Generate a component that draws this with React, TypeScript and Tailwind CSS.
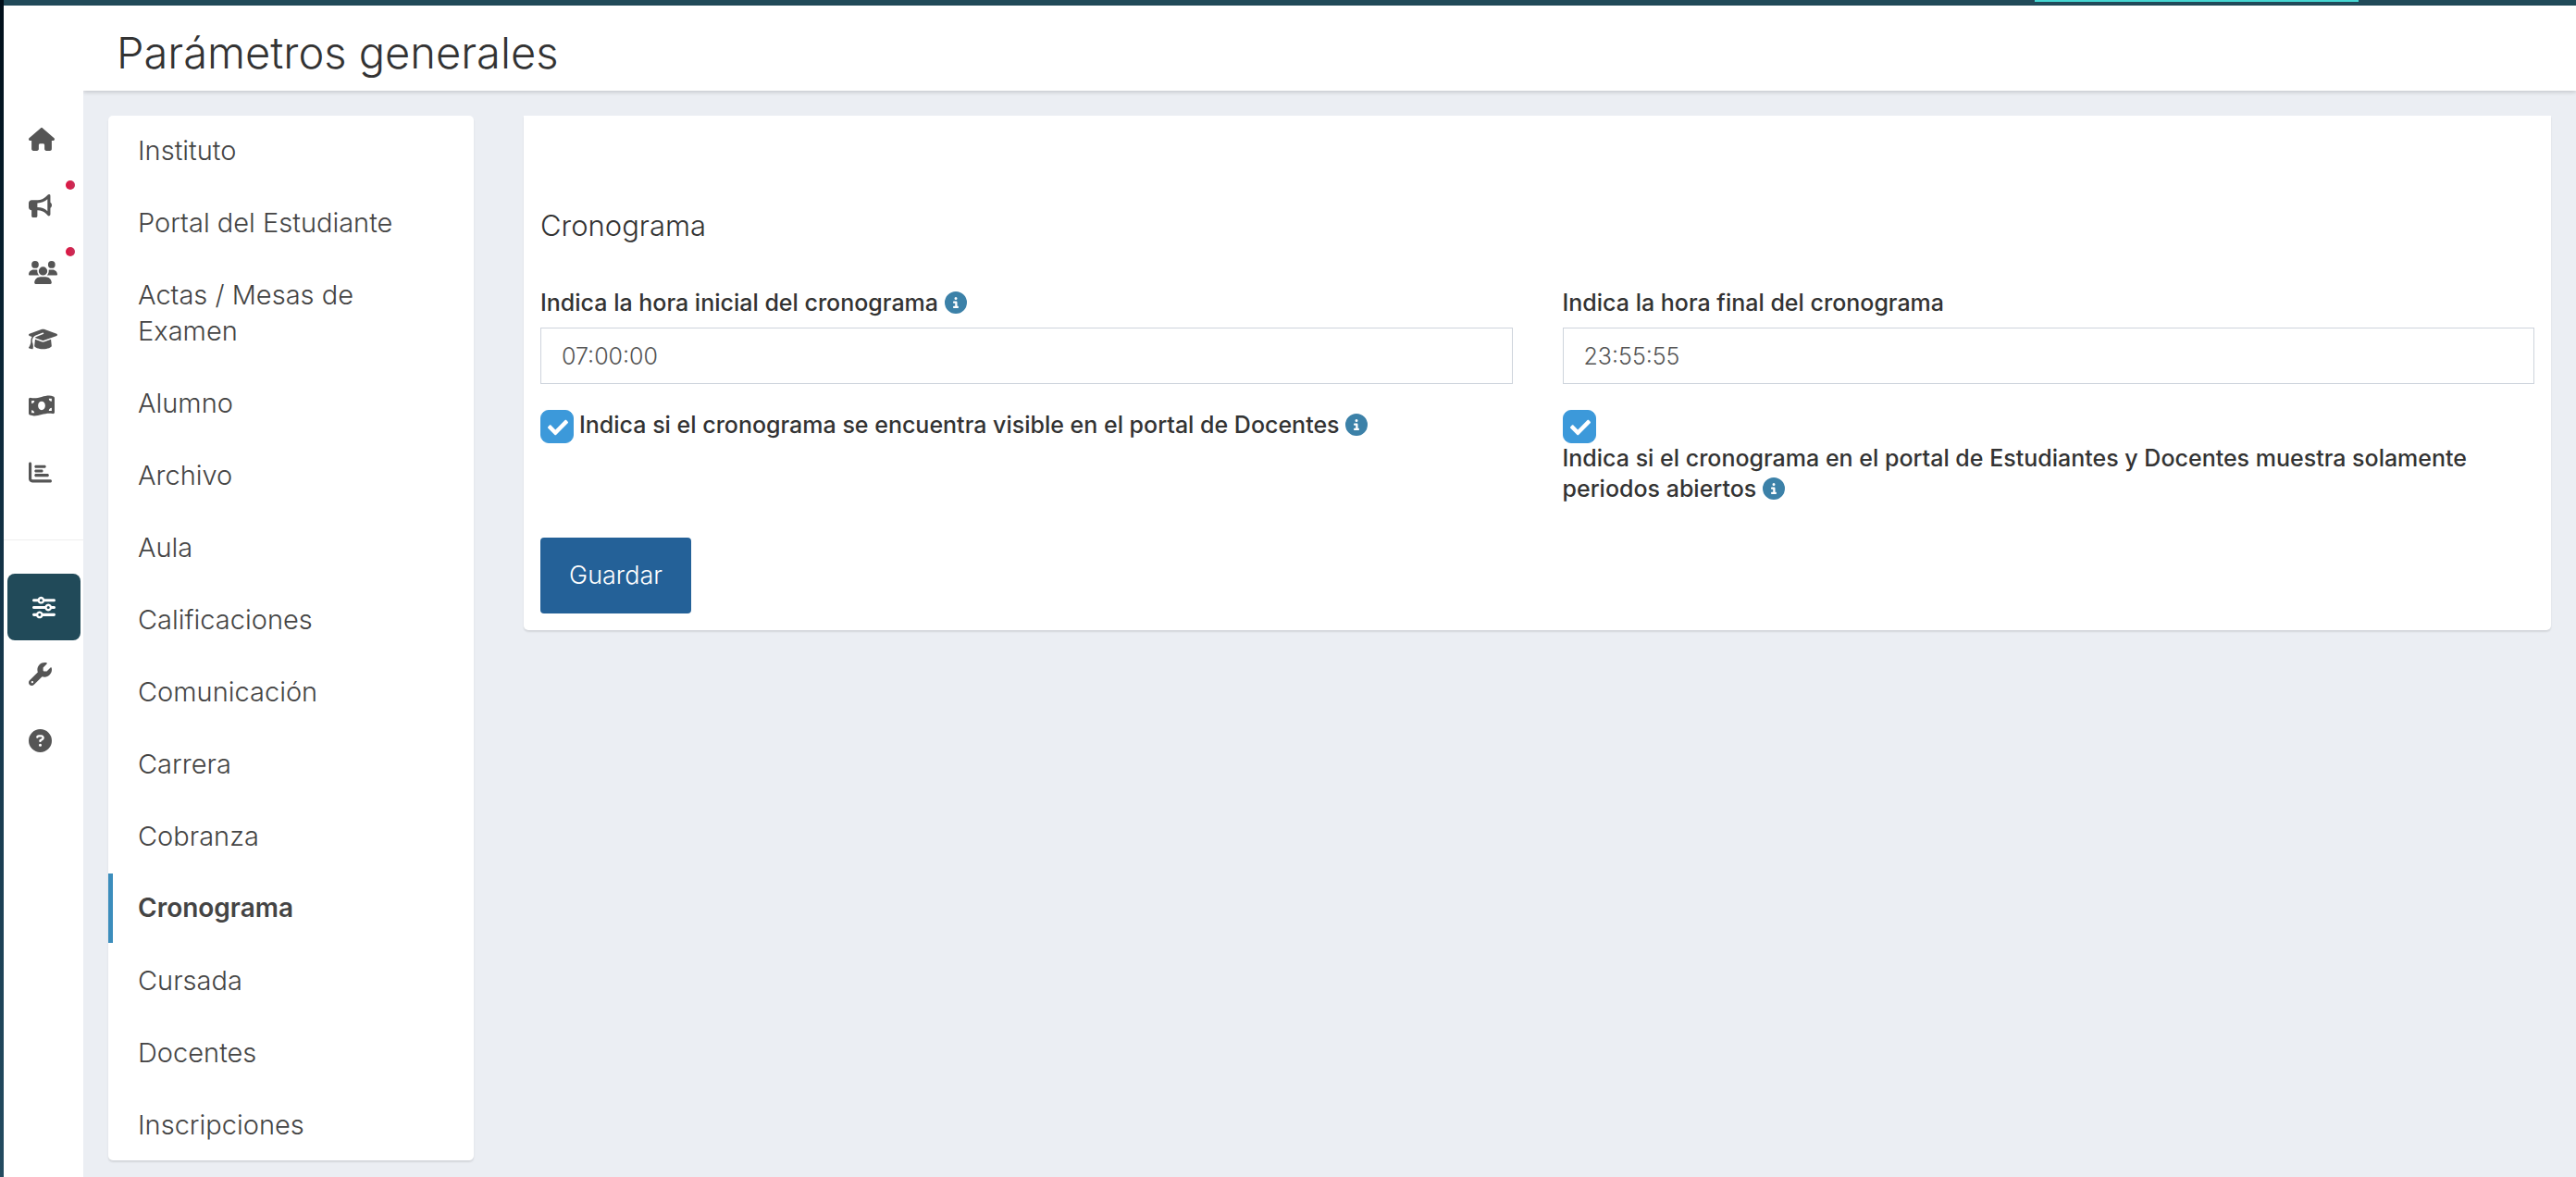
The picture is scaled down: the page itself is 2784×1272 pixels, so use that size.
import type { ReactNode } from "react";
import type { IconType } from "react-icons";
import { FaCheck } from "react-icons/fa";
import {
  FaBullhorn,
  FaChartBar,
  FaCircleInfo,
  FaCircleQuestion,
  FaGraduationCap,
  FaHouse,
  FaMoneyBillWave,
  FaSliders,
  FaUsers,
  FaWrench,
} from "react-icons/fa6";

type RailItem = { label: string; icon: IconType; size: string; alert?: boolean; active?: boolean };

const narrow = "h-[25px] w-[25px]";
const medium = "h-[25px] w-[28px]";
const wide = "h-[25px] w-[31px]";

const mainItems: RailItem[] = [
  { label: "Inicio", icon: FaHouse, size: medium },
  { label: "Comunicados", icon: FaBullhorn, size: narrow, alert: true },
  { label: "Usuarios", icon: FaUsers, size: wide, alert: true },
  { label: "Carreras", icon: FaGraduationCap, size: wide },
  { label: "Pagos", icon: FaMoneyBillWave, size: medium },
  { label: "Reportes", icon: FaChartBar, size: narrow },
];

const toolItems: RailItem[] = [
  { label: "Parámetros", icon: FaSliders, size: narrow, active: true },
  { label: "Herramientas", icon: FaWrench, size: narrow },
  { label: "Ayuda", icon: FaCircleQuestion, size: narrow },
];

const sections = [
  "Instituto",
  "Portal del Estudiante",
  "Actas / Mesas de Examen",
  "Alumno",
  "Archivo",
  "Aula",
  "Calificaciones",
  "Comunicación",
  "Carrera",
  "Cobranza",
  "Cronograma",
  "Cursada",
  "Docentes",
  "Inscripciones",
];

function RailLink({ label, icon: Icon, size, alert, active }: RailItem) {
  return (
    <a
      href="#"
      aria-label={label}
      className={
        active
          ? "relative mr-[3px] ml-1 flex h-[72px] items-center rounded-lg bg-[#214a59] pl-[27px] text-white"
          : "relative flex h-[72px] items-center pl-[27px] text-[#555555]"
      }
    >
      <Icon className={size} />
      {alert && (
        <span className="absolute top-[9px] right-[9px] size-[10px] rounded-full bg-linear-to-r from-[#dd0f3f] to-[#c72f5a]" />
      )}
    </a>
  );
}

function Info() {
  return <FaCircleInfo className="inline-block size-6 align-[-3px] text-[#3c81a8]" />;
}

function TimeField({ id, value, children }: { id: string; value: string; children: ReactNode }) {
  return (
    <div>
      <label htmlFor={id} className="block text-[25px] leading-[33px] font-medium text-[#333333]">
        {children}
      </label>
      <input
        id={id}
        type="text"
        defaultValue={value}
        className="mt-[10px] block h-[61px] w-full border border-[#ced4dc] bg-white px-[22px] text-[25px] font-[350] text-[#555555] outline-none"
      />
    </div>
  );
}

function Check({ id }: { id: string }) {
  return (
    <span className="relative inline-flex size-9 shrink-0">
      <input
        id={id}
        type="checkbox"
        defaultChecked
        className="peer size-9 appearance-none rounded-[9px] border border-[#3c99da] bg-white checked:bg-[#3c99da]"
      />
      <FaCheck className="pointer-events-none absolute top-2 left-2 hidden size-[22px] text-white peer-checked:block" />
    </span>
  );
}

export default function App() {
  return (
    <div className="flex min-h-screen flex-col bg-[#ebeef3] font-['Inter','Liberation_Sans',sans-serif]">
      <div className="flex grow">
        <div className="w-1 shrink-0 bg-linear-to-b from-[#010f1a] via-[#143448] to-[#234b60]" />
        <div className="flex min-w-0 grow flex-col">
          <div className="h-[6px] bg-[#214a59]">
            <div className="mr-[235px] ml-auto h-[2px] w-[350px] bg-[#45d7d3]" />
          </div>
          <div className="flex grow">
            <nav aria-label="Principal" className="z-10 w-[86px] shrink-0 bg-white pt-[108px]">
              {mainItems.map((item) => (
                <RailLink key={item.label} {...item} />
              ))}
              <hr className="mt-[37px] mb-9 border-t border-[#eeeeee]" />
              {toolItems.map((item) => (
                <RailLink key={item.label} {...item} />
              ))}
            </nav>

            <div className="min-w-0 grow">
              <header className="flex h-[92px] items-center bg-white pt-[10px] pl-[36px] shadow-[0_2px_4px_rgba(0,0,0,0.15)]">
                <h1 className="text-[47px] leading-[60px] font-[350] whitespace-nowrap text-[#333333]">
                  Parámetros generales
                </h1>
              </header>

              <div className="flex items-start gap-[54px] px-[27px] pt-[27px] pb-[17px]">
                <nav
                  aria-label="Secciones"
                  className="flex w-[395px] shrink-0 flex-col gap-[3px] overflow-hidden rounded-[5px] bg-white pb-px shadow-[0_2px_2px_rgba(0,0,0,0.1)]"
                >
                  {sections.map((name) => (
                    <a
                      key={name}
                      href="#"
                      className={
                        name === "Cronograma"
                          ? "border-l-[5px] border-[#3c8dbc] py-[18px] pr-[60px] pl-[27px] text-[28px] leading-[39px] font-semibold text-[#444444]"
                          : "border-l-[5px] border-transparent py-[18px] pr-[60px] pl-[27px] text-[29px] leading-[39px] font-[350] text-[#444444]"
                      }
                    >
                      {name}
                    </a>
                  ))}
                </nav>

                <main className="min-w-0 grow rounded-b-[5px] bg-white px-[18px] pt-[99px] pb-[18px] shadow-[0_2px_2px_rgba(0,0,0,0.1)]">
                  <h2 className="text-[31px] leading-[39px] font-[350] text-[#333333]">Cronograma</h2>
                  <form>
                    <div className="mt-12 grid grid-cols-2 gap-x-[54px] gap-y-7">
                      <TimeField id="hora-inicial" value="07:00:00">
                        Indica la hora inicial del cronograma <Info />
                      </TimeField>
                      <TimeField id="hora-final" value="23:55:55">
                        Indica la hora final del cronograma
                      </TimeField>
                      <div className="flex items-start gap-[6px]">
                        <Check id="visible-docentes" />
                        <label
                          htmlFor="visible-docentes"
                          className="text-[25px] leading-[33px] font-medium text-[#333333]"
                        >
                          Indica si el cronograma se encuentra visible en el portal de Docentes <Info />
                        </label>
                      </div>
                      <div className="flex flex-col items-start">
                        <Check id="solo-abiertos" />
                        <label
                          htmlFor="solo-abiertos"
                          className="text-[25px] leading-[33px] font-medium text-[#333333]"
                        >
                          Indica si el cronograma en el portal de Estudiantes y Docentes muestra solamente
                          periodos abiertos <Info />
                        </label>
                      </div>
                    </div>
                    <button
                      type="button"
                      className="mt-9 block h-[82px] w-[163px] rounded bg-[#246198] text-[27px] font-light text-white"
                    >
                      Guardar
                    </button>
                  </form>
                </main>
              </div>
            </div>
          </div>
        </div>
      </div>
    </div>
  );
}
